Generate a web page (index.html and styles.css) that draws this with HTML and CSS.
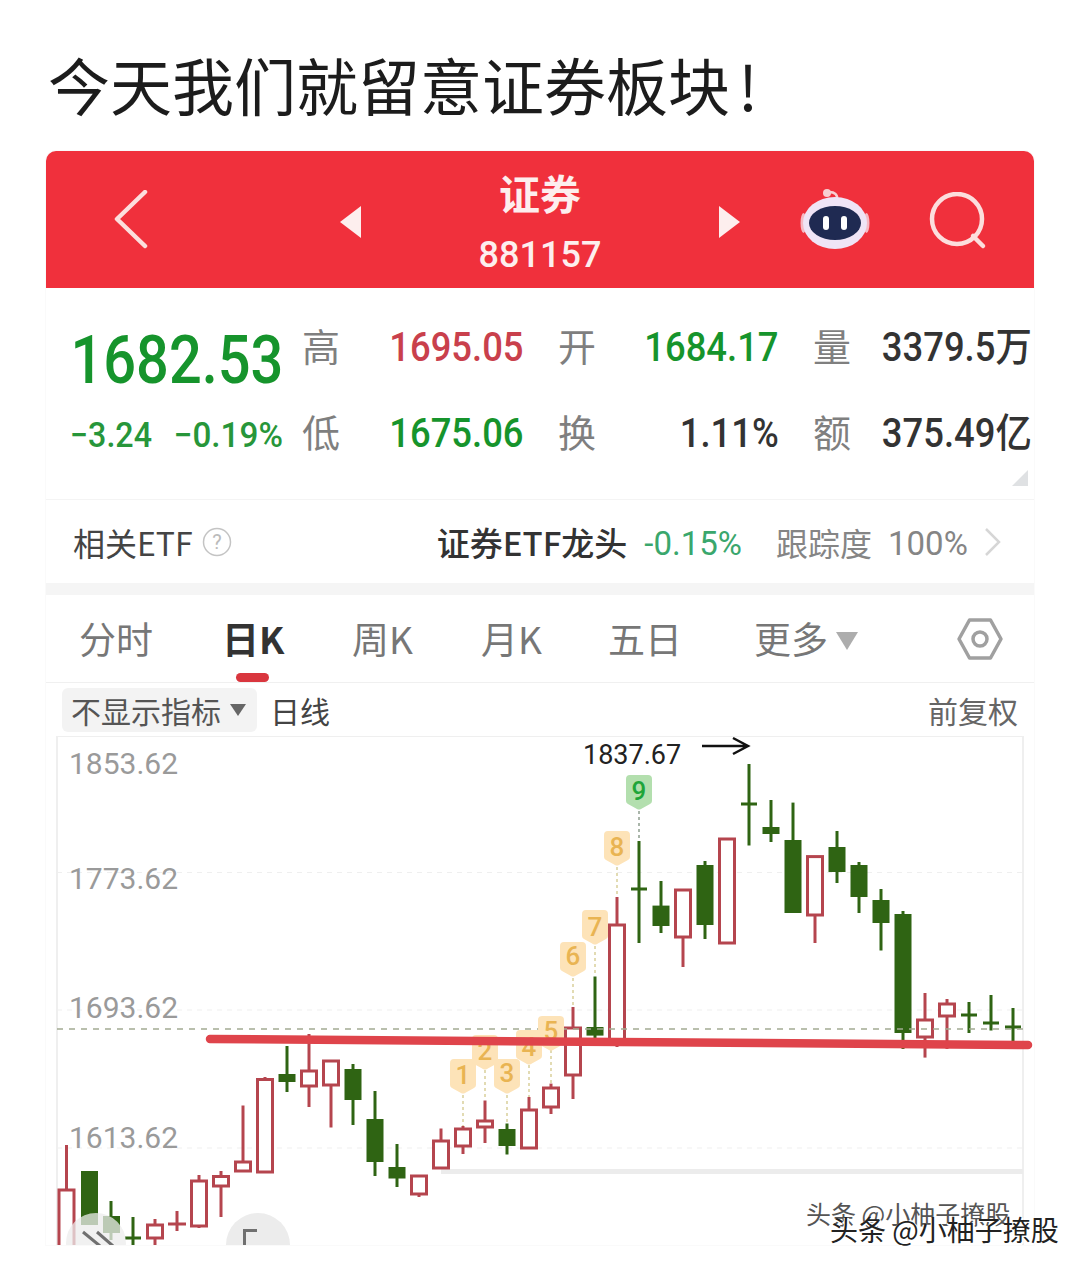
FILE: index.html
```html
<!DOCTYPE html>
<html lang="zh-CN">
<head>
    <meta charset="UTF-8">
    <meta name="viewport" content="width=device-width, initial-scale=1.0">
    <title>今天我们就留意证券板块</title>
    <link rel="stylesheet" href="styles.css">
</head>
<body>
    <h1 class="headline">今天我们就留意证券板块<span class="headline-end">!</span></h1>

    <div class="card">
        <!-- red nav bar -->
        <header class="nav">
            <div class="nav-back">
                <svg width="36" height="60" viewBox="0 0 36 60"><path d="M31 2 3 29l28 27" class="nav-line"/></svg>
            </div>
            <div class="tri tri-left"></div>
            <div class="nav-title">
                <div class="nav-name">证券</div>
                <div class="nav-code">881157</div>
            </div>
            <div class="tri tri-right"></div>
            <svg class="nav-robot" width="70" height="64" viewBox="0 0 70 64">
                <path d="M37 12c1-5-2-8-8-8" class="robot-wire"/>
                <circle cx="27" cy="5" r="4" fill="#f7cfd2"/>
                <ellipse cx="3.500" cy="35" rx="3" ry="10" fill="#f5b9c4"/>
                <ellipse cx="66.500" cy="35" rx="3" ry="10" fill="#f5b9c4"/>
                <ellipse cx="35" cy="35" rx="32" ry="26" fill="#efe4f6"/>
                <ellipse cx="35" cy="35" rx="26" ry="17" fill="#1f2a52"/>
                <rect x="23" y="28" width="6" height="14" rx="3" fill="#fff"/>
                <rect x="41" y="28" width="6" height="14" rx="3" fill="#fff"/>
            </svg>
            <svg class="nav-search" width="60" height="60" viewBox="0 0 60 60">
                <circle cx="28" cy="27" r="25" class="nav-line"/>
                <path d="M44 44l10 10" class="nav-line"/>
            </svg>
        </header>

        <!-- quote numbers -->
        <section class="stats">
            <div class="price"><span class="num green">1682.53</span></div>
            <div class="stat-label">高</div>
            <div class="stat-val"><span class="num red">1695.05</span></div>
            <div class="stat-label">开</div>
            <div class="stat-val"><span class="num green">1684.17</span></div>
            <div class="stat-label">量</div>
            <div class="stat-val"><span class="num dark">3379.5万</span></div>

            <div class="change">
                <span class="num-small num-small-left">−3.24</span>
                <span class="num-small">−0.19%</span>
            </div>
            <div class="stat-label">低</div>
            <div class="stat-val"><span class="num green">1675.06</span></div>
            <div class="stat-label">换</div>
            <div class="stat-val"><span class="num dark">1.11%</span></div>
            <div class="stat-label">额</div>
            <div class="stat-val"><span class="num dark">375.49亿</span></div>
            <div class="corner"></div>
        </section>

        <section class="etf">
            <span class="etf-title">相关ETF</span>
            <svg class="etf-help" width="30" height="30" viewBox="0 0 30 30">
                <circle cx="15" cy="15" r="13.500" fill="none" stroke="#c4c4c4" stroke-width="1.500"/>
                <text x="15" y="22" text-anchor="middle" class="etf-q">?</text>
            </svg>
            <span class="etf-name">证券ETF龙头</span>
            <span class="etf-pct">-0.15%</span>
            <span class="etf-track">跟踪度</span>
            <span class="etf-track-val">100%</span>
            <svg class="etf-arrow" width="18" height="30" viewBox="0 0 18 30"><path d="M2 2l13 13L2 28" fill="none" stroke="#d6d6d6" stroke-width="2.500"/></svg>
        </section>

        <div class="band"></div>

        <nav class="tabs">
            <span class="tab">分时</span>
            <span class="tab tab-active">日K</span>
            <span class="tab">周K</span>
            <span class="tab">月K</span>
            <span class="tab">五日</span>
            <span class="tab tab-more">更多<i class="tab-caret"></i></span>
            <svg class="tab-hex" width="46" height="44" viewBox="0 0 46 44">
                <path d="M12.500 3h21L44 22 33.500 41h-21L2 22z" fill="none" stroke="#a0a0a0" stroke-width="3.500" stroke-linejoin="round"/>
                <circle cx="23" cy="22" r="7" fill="none" stroke="#a0a0a0" stroke-width="3.500"/>
            </svg>
        </nav>

        <div class="subbar">
            <span class="ind-select">不显示指标<i class="ind-caret"></i></span>
            <span class="ind-period">日线</span>
            <span class="ind-adjust">前复权</span>
        </div>

        <!-- k line chart, viewBox uses page coordinates -->
        <svg class="chart" width="988" height="509" viewBox="46 736 988 509">
            <defs>
                <path id="flag" d="M-13-14q0-4 4-4H9q4 0 4 4V8q0 2-2 3l-9 5q-2 1-4 0l-9-5q-2-1-2-3z"/>
            </defs>

            <rect x="57" y="736" width="966" height="520" class="frame"/>
            <path d="M57 872.500H1023M57 1010H1023M57 1148H1023" class="grid"/>
            <rect x="441" y="1169" width="582" height="5" fill="#ececec"/>

            <text x="69" y="774" class="axis">1853.62</text>
            <text x="69" y="889" class="axis">1773.62</text>
            <text x="69" y="1018" class="axis">1693.62</text>
            <text x="69" y="1148" class="axis">1613.62</text>

            <g class="up"><path d="M66.500 1145V1190"/><rect x="59" y="1190" width="15" height="70"/></g>
            <g class="down"><rect x="81" y="1171" width="17" height="54"/></g>
            <g class="down"><path d="M111 1201V1240"/><rect x="103" y="1216" width="17" height="17"/></g>
            <g class="down"><path d="M133 1217V1250M125 1238H141"/></g>
            <g class="up"><path d="M155 1219V1250"/><rect x="147.500" y="1225" width="15" height="13"/></g>
            <g class="up"><path d="M177 1211V1231M168 1224H186"/></g>
            <g class="up"><path d="M199 1175V1228"/><rect x="191.500" y="1181" width="15" height="45"/></g>
            <g class="up"><path d="M221 1171V1217"/><rect x="213.500" y="1176.500" width="15" height="9.500"/></g>
            <g class="up"><path d="M243 1105.500V1165"/><rect x="235.500" y="1162" width="15" height="9"/></g>
            <g class="up"><path d="M265 1077V1085"/><rect x="257.500" y="1079.500" width="15" height="92.500"/></g>
            <g class="down"><path d="M287 1046V1092"/><rect x="278.500" y="1074" width="17" height="8"/></g>
            <g class="up"><path d="M309 1034V1107"/><rect x="301.500" y="1071" width="15" height="15"/></g>
            <g class="up"><path d="M331 1085V1127.500"/><rect x="323.500" y="1061" width="15" height="24"/></g>
            <g class="down"><path d="M353 1064V1125"/><rect x="344.500" y="1069" width="17" height="31"/></g>
            <g class="down"><path d="M375 1091V1176"/><rect x="366.500" y="1119" width="17" height="43"/></g>
            <g class="down"><path d="M397 1144V1187"/><rect x="388.500" y="1167" width="17" height="11.500"/></g>
            <g class="up"><path d="M419 1190V1197"/><rect x="411.500" y="1176" width="15" height="18"/></g>
            <g class="up"><path d="M441 1128.500V1145"/><rect x="433.500" y="1141" width="15" height="27"/></g>
            <g class="up"><path d="M463 1126V1154"/><rect x="455.500" y="1129" width="15" height="17"/></g>
            <g class="up"><path d="M485 1100.500V1143"/><rect x="477.500" y="1121" width="15" height="6"/></g>
            <g class="down"><path d="M507 1123.500V1154.500"/><rect x="498.500" y="1129" width="17" height="17"/></g>
            <g class="up"><path d="M529 1097V1112"/><rect x="521.500" y="1110" width="15" height="38"/></g>
            <g class="up"><path d="M551 1083.600V1114"/><rect x="543.500" y="1088" width="15" height="19"/></g>
            <g class="up"><path d="M573 1007V1099"/><rect x="565.500" y="1028" width="15" height="47"/></g>
            <g class="down"><path d="M595 976.500V1039"/><rect x="586.500" y="1027" width="17" height="8.600"/></g>
            <g class="up"><path d="M617 897V1047"/><rect x="609.500" y="925" width="15" height="117"/></g>
            <g class="down"><path d="M639 841V943M631 889H647"/></g>
            <g class="down"><path d="M661 881V933"/><rect x="652.500" y="905.600" width="17" height="20.400"/></g>
            <g class="up"><path d="M683 935V967"/><rect x="675.500" y="890" width="15" height="47"/></g>
            <g class="down"><path d="M705 861V939"/><rect x="696.500" y="865" width="17" height="60"/></g>
            <g class="up"><rect x="719.500" y="839" width="15" height="104"/></g>
            <g class="down"><path d="M749 764V845.500M741 804H757"/></g>
            <g class="down"><path d="M771 800V842"/><rect x="762.500" y="827" width="17" height="7"/></g>
            <g class="down"><path d="M793 802.600V850"/><rect x="784.500" y="840" width="17" height="73"/></g>
            <g class="up"><path d="M815 910V943"/><rect x="807.500" y="856.600" width="15" height="58.400"/></g>
            <g class="down"><path d="M837 831V883"/><rect x="828.500" y="847" width="17" height="25"/></g>
            <g class="down"><path d="M859 862V913"/><rect x="850.500" y="865" width="17" height="32"/></g>
            <g class="down"><path d="M881 889V950.500"/><rect x="872.500" y="900" width="17" height="23"/></g>
            <g class="down"><path d="M903 911V1049"/><rect x="894.500" y="914" width="17" height="119"/></g>
            <g class="up"><path d="M925 993V1057.600"/><rect x="917.500" y="1020" width="15" height="17"/></g>
            <g class="up"><path d="M947 999V1049"/><rect x="939.500" y="1004" width="15" height="12"/></g>
            <g class="down"><path d="M969 1002V1033M961 1015H977"/></g>
            <g class="down"><path d="M991 995V1030.500M983 1023H999"/></g>
            <g class="down"><path d="M1013 1008V1041M1005 1027H1021"/></g>

            <path d="M57 1029H1023" class="last-close"/>

            <path d="M463 1095V1126M485 1070V1100M507 1095V1123M529 1065V1097M551 1050V1083M573 978V1007M595 946V976M617 867V897" class="dots"/>
            <path d="M639 811V841" class="dots dots-green"/>

            <use href="#flag" x="463" y="1077" class="flag"/>
            <use href="#flag" x="485" y="1053" class="flag"/>
            <use href="#flag" x="507" y="1077" class="flag"/>
            <use href="#flag" x="529" y="1048" class="flag"/>
            <use href="#flag" x="551" y="1034" class="flag"/>
            <use href="#flag" x="573" y="960" class="flag"/>
            <use href="#flag" x="595" y="928" class="flag"/>
            <use href="#flag" x="617" y="849" class="flag"/>
            <use href="#flag" x="639" y="793" class="flag flag-green"/>
            <text x="463" y="1084" class="flag-num">1</text>
            <text x="485" y="1060" class="flag-num">2</text>
            <text x="507" y="1082" class="flag-num">3</text>
            <text x="529" y="1056" class="flag-num">4</text>
            <text x="551" y="1040" class="flag-num">5</text>
            <text x="573" y="965" class="flag-num">6</text>
            <text x="595" y="936" class="flag-num">7</text>
            <text x="617" y="856" class="flag-num">8</text>
            <text x="639" y="800" class="flag-num flag-num-green">9</text>

            <path d="M210 1039 1028 1045" class="support"/>

            <text x="583" y="764" class="peak">1837.67</text>
            <path d="M702 746H747M733 738l15 8-15 8" class="peak-arrow"/>

            <circle cx="96" cy="1243" r="30" fill="#ececec" fill-opacity=".75"/>
            <path d="M83 1232 100 1246M97 1232 113 1246" class="btn-line"/>
            <circle cx="258" cy="1245" r="32" fill="#ececec"/>
            <path d="M257 1230.500H244.500V1246" class="btn-line"/>
        </svg>
    </div>

    <div class="mark mark-back">头条 @小柚子撩股</div>
    <div class="mark mark-front">头条 @小柚子撩股</div>
</body>
</html>
```

FILE: styles.css
```css
html, body {
    margin: 0;
    padding: 0;
    background-color: #ffffff;
}
body {
    position: relative;
    width: 1080px;
    height: 1267px;
    overflow: hidden;
    font-family: "Noto Sans CJK SC", "Noto Sans", sans-serif;
}
.headline {
    margin: 0;
    height: 151px;
    padding-left: 48px;
    box-sizing: border-box;
    font-size: 62px;
    font-weight: 400;
    line-height: 168px;
    color: #1c1c1c;
}
.headline-end {
    margin-left: 8px;
}
.card {
    width: 988px;
    margin-left: 46px;
    box-shadow: 0 0 0 1px #fafafa;
    border-radius: 10px 10px 0 0;
}

/* nav bar */
.nav {
    display: flex;
    align-items: center;
    height: 137px;
    background-color: #f0303c;
    border-radius: 10px 10px 0 0;
}
.nav-back {
    display: flex;
    width: 294px;
    padding-left: 68px;
    box-sizing: border-box;
}
.nav-line {
    fill: none;
    stroke: #fcdedd;
    stroke-width: 4.5px;
    stroke-linecap: round;
    stroke-linejoin: round;
}
.robot-wire {
    fill: none;
    stroke: #f7cfd2;
    stroke-width: 2.5px;
}
.tri {
    width: 0;
    height: 0;
    margin-top: 5px;
    border-top: 16px solid transparent;
    border-bottom: 16px solid transparent;
}
.tri-left {
    border-right: 21px solid #fdeeee;
}
.tri-right {
    border-left: 21px solid #fdeeee;
}
.nav-title {
    width: 358px;
    text-align: center;
    color: #fdeeee;
}
.nav-name {
    font-size: 41px;
    font-weight: 700;
    line-height: 56px;
    margin-top: 5px;
}
.nav-code {
    font-family: Roboto, sans-serif;
    font-size: 36px;
    font-weight: 500;
    line-height: 50px;
    margin-top: 10px;
}
.nav-robot {
    margin-left: 60px;
    margin-top: 0;
}
.nav-search {
    margin-left: 59px;
    margin-top: 5px;
}

/* quote numbers */
.stats {
    position: relative;
    display: grid;
    grid-template-columns: 213px 57px 183px 73px 182px 73px 180px;
    grid-auto-rows: 86px;
    align-items: center;
    height: 212px;
    box-sizing: border-box;
    padding: 16px 0 24px 24px;
    border-bottom: 1px solid #f4f4f4;
}
.price {
    display: flex;
    justify-content: flex-end;
    padding-top: 28px;
}
.num, .num-small {
    display: inline-block;
    font-family: Roboto, "Noto Sans CJK SC", sans-serif;
    transform-origin: right center;
    white-space: nowrap;
}
.num {
    font-size: 40px;
    line-height: 48px;
    font-weight: 500;
    margin-top: 2px;
    transform: scaleX(.91);
}
.price .num {
    font-size: 66px;
    line-height: 76px;
    margin-top: 0;
    transform: scaleX(.875);
}
.green {
    color: #16942c;
}
.red {
    color: #c9404c;
}
.dark {
    color: #333333;
}
.stat-label {
    font-size: 38px;
    line-height: 48px;
    margin-top: -4px;
    color: #7f7f7f;
    text-align: right;
}
.stat-val {
    display: flex;
    justify-content: flex-end;
    margin-right: -1px;
}
.change {
    display: flex;
    justify-content: space-between;
    padding-top: 6px;
}
.num-small {
    font-size: 35px;
    line-height: 46px;
    font-weight: 500;
    color: #27963a;
    transform: scaleX(.95);
}
.num-small-left {
    transform-origin: left center;
    transform: scaleX(.92);
}
.corner {
    position: absolute;
    right: 6px;
    bottom: 13px;
    width: 0;
    height: 0;
    border-left: 16px solid transparent;
    border-bottom: 16px solid #dfe1e3;
}

/* etf row */
.etf {
    display: flex;
    align-items: center;
    height: 83px;
    padding-left: 27px;
    font-size: 32px;
}
.etf-title {
    color: #444444;
}
.etf-help {
    margin-left: 9px;
}
.etf-q {
    font-family: Roboto, sans-serif;
    font-size: 20px;
    fill: #bbbbbb;
}
.etf-name {
    margin-left: 205px;
    font-size: 33px;
    color: #333333;
    font-weight: 500;
}
.etf-pct {
    margin-left: 17px;
    margin-top: 4px;
    font-family: Roboto, sans-serif;
    font-size: 33px;
    color: #3aa76d;
}
.etf-track {
    margin-left: 34px;
    color: #858585;
}
.etf-track-val {
    margin-left: 16px;
    margin-top: 4px;
    font-family: Roboto, sans-serif;
    font-size: 33px;
    color: #858585;
}
.etf-arrow {
    margin-left: 16px;
}
.band {
    height: 12px;
    background-color: #f5f5f5;
}

/* period tabs */
.tabs {
    position: relative;
    display: grid;
    grid-template-columns: 147px 126px 129px 127px 146px 200px 1fr;
    align-items: center;
    height: 88px;
    padding-left: 33px;
    box-sizing: border-box;
    border-bottom: 1px solid #f0f0f0;
}
.tab {
    font-size: 37px;
    color: #777777;
    display: flex;
    align-items: center;
    line-height: 88px;
    height: 88px;
    margin-top: -1px;
}
.tab-active {
    font-weight: 700;
    color: #333333;
    margin-left: -4px;
}
.tab-active::after {
    content: "";
    position: absolute;
    left: 190px;
    bottom: 0;
    width: 33px;
    height: 9px;
    border-radius: 5px;
    background-color: #d9363e;
}
.tab-caret {
    width: 0;
    height: 0;
    margin-left: 8px;
    margin-top: 6px;
    border-left: 11px solid transparent;
    border-right: 11px solid transparent;
    border-top: 18px solid #adadad;
}
.tab-hex {
    margin-left: 3px;
}

/* indicator row */
.subbar {
    display: flex;
    align-items: center;
    height: 53px;
    padding-left: 16px;
    padding-right: 16px;
    font-size: 30px;
    color: #555555;
}
.ind-select {
    display: flex;
    align-items: center;
    width: 195px;
    height: 44px;
    padding-left: 9px;
    box-sizing: border-box;
    background-color: #f3f3f3;
    border-radius: 6px;
}
.ind-caret {
    width: 0;
    height: 0;
    margin-left: 9px;
    border-left: 8px solid transparent;
    border-right: 8px solid transparent;
    border-top: 12px solid #666666;
}
.ind-period {
    margin-left: 13px;
    color: #444444;
}
.ind-adjust {
    margin-left: auto;
    color: #666666;
}

/* chart */
.chart {
    display: block;
}
.frame {
    fill: none;
    stroke: #efefef;
    stroke-width: 2px;
}
.grid {
    fill: none;
    stroke: #efefef;
    stroke-width: 1px;
    stroke-dasharray: 5 5;
}
.axis {
    font-family: Roboto, sans-serif;
    font-size: 30px;
    fill: #9a9a9a;
}
.up path, .up rect {
    stroke: #b5454e;
    stroke-width: 3px;
}
.up path {
    fill: none;
}
.up rect {
    fill: #ffffff;
}
.down path {
    fill: none;
    stroke: #2f6413;
    stroke-width: 3px;
}
.down rect {
    fill: #2f6413;
}
.last-close {
    fill: none;
    stroke: #a3ab93;
    stroke-width: 1.5px;
    stroke-dasharray: 6 6;
}
.dots {
    fill: none;
    stroke: #d9d09a;
    stroke-width: 1.5px;
    stroke-dasharray: 3 3;
}
.dots-green {
    stroke: #8f9f8f;
}
.flag {
    fill: #fde3b8;
}
.flag-green {
    fill: #b3dfae;
}
.flag-num {
    font-family: Roboto, sans-serif;
    font-size: 26px;
    font-weight: 500;
    fill: #e9b452;
    text-anchor: middle;
}
.flag-num-green {
    fill: #1fa53a;
}
.support {
    fill: none;
    stroke: #df444b;
    stroke-width: 8.5px;
    stroke-linecap: round;
}
.peak {
    font-family: Roboto, sans-serif;
    font-size: 27px;
    fill: #222222;
}
.peak-arrow {
    fill: none;
    stroke: #111111;
    stroke-width: 2.5px;
}
.btn-line {
    fill: none;
    stroke: #707070;
    stroke-width: 3px;
}

/* repost watermark, sits over the picture */
.mark {
    position: absolute;
    white-space: nowrap;
}
.mark-back {
    left: 806px;
    top: 1196px;
    font-size: 25px;
    line-height: 34px;
    color: #555555;
    text-shadow: 1px 1px 0 #ffffff;
}
.mark-front {
    left: 830px;
    top: 1211px;
    font-size: 28px;
    line-height: 36px;
    color: #222222;
    text-shadow: -1px 1px 0 #ffffff, 2px 1px 0 #ffffff;
}
```
